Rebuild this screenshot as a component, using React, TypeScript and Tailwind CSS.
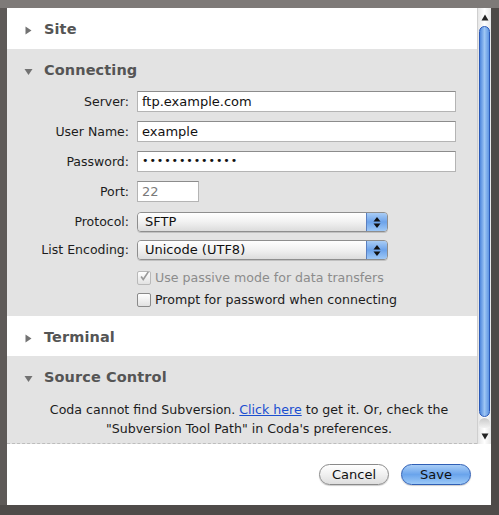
import React from 'react';

const font = { fontFamily: '"DejaVu Sans", "Lucida Grande", Verdana, sans-serif' };

function Disclosure({ open }: { open: boolean }) {
  return (
    <svg width="9" height="9" viewBox="0 0 9 9" className="shrink-0">
      {open ? <path d="M0.5 2 L8.5 2 L4.5 8 Z" fill="#727272" /> : <path d="M1.5 0.5 L7.5 4.5 L1.5 8.5 Z" fill="#727272" />}
    </svg>
  );
}

function SectionHeader({ title, open }: { title: string; open: boolean }) {
  return (
    <div className="flex items-center h-[42px] pl-[17px] pt-[2px]">
      <Disclosure open={open} />
      <span className="ml-[11px] text-[14.5px] font-bold text-[#555555] tracking-[0.1px]">{title}</span>
    </div>
  );
}

function Label({ children }: { children: React.ReactNode }) {
  return <div className="w-[123px] text-right text-[12.5px] text-[#1c1c1c] pr-[1px]">{children}</div>;
}

function TextField({ width, children, dim }: { width: string; children: React.ReactNode; dim?: boolean }) {
  return (
    <div
      className={`${width} h-[21px] ml-[7px] bg-white border border-[#b4b4b4] border-t-[#8c8c8c] flex items-center pl-[4px] text-[13px] ${dim ? 'text-[#7a7a7a]' : 'text-[#111111]'}`}
    >
      {children}
    </div>
  );
}

function Popup({ value }: { value: string }) {
  return (
    <div className="w-[251px] h-[20px] ml-[7px] flex rounded-[4px] border border-[#8e8e8e] overflow-hidden shadow-[0_1px_0_rgba(0,0,0,0.15)]">
      <div className="flex-1 flex items-center pl-[7px] text-[13px] text-[#111111] bg-gradient-to-b from-[#ffffff] via-[#f1f1f1] to-[#dcdcdc]">
        {value}
      </div>
      <div className="w-[21px] flex items-center justify-center border-l border-[#5a7fc0] bg-gradient-to-b from-[#a9ccf5] via-[#6da3ea] to-[#9ec8f6]">
        <svg width="8" height="13" viewBox="0 0 8 13">
          <path d="M4 1 L7.5 5.5 L0.5 5.5 Z" fill="#111" />
          <path d="M0.5 7.5 L7.5 7.5 L4 12 Z" fill="#111" />
        </svg>
      </div>
    </div>
  );
}

function Checkbox({ checked, disabled }: { checked?: boolean; disabled?: boolean }) {
  return (
    <div
      className={`w-[14px] h-[14px] rounded-[2px] border bg-gradient-to-b from-[#ffffff] to-[#e2e2e2] flex items-center justify-center ${disabled ? 'border-[#b9b9b9]' : 'border-[#8a8a8a]'}`}
    >
      {checked && (
        <svg width="13" height="13" viewBox="0 0 13 13" className="-mt-[3px] ml-[1px]">
          <path d="M2.5 6.5 L5 10 L11 1" stroke={disabled ? '#9a9a9a' : '#222'} strokeWidth="2" fill="none" />
        </svg>
      )}
    </div>
  );
}

function Scrollbar() {
  return (
    <div className="w-[14px] flex flex-col bg-gradient-to-r from-[#e6e6e6] via-[#ffffff] to-[#e6e6e6] border-l border-[#cfcfcf]">
      <div className="h-[18px] flex items-center justify-center">
        <svg width="8" height="7" viewBox="0 0 8 7">
          <path d="M4 0.5 L7.5 6.5 L0.5 6.5 Z" fill="#222" />
        </svg>
      </div>
      <div className="flex-1 mx-[1px] rounded-full border border-[#2a59b8] bg-gradient-to-r from-[#4f87dd] via-[#9ec6f4] to-[#5e95e2]" />
      <div className="h-[10px] mx-[1px] mt-[1px] rounded-t-full bg-gradient-to-b from-[#c9c9c9] to-[#f2f2f2]" />
      <div className="h-[16px] flex items-center justify-center">
        <svg width="8" height="7" viewBox="0 0 8 7">
          <path d="M0.5 0.5 L7.5 0.5 L4 6.5 Z" fill="#222" />
        </svg>
      </div>
    </div>
  );
}

export default function App() {
  return (
    <div className="w-[499px] h-[515px] bg-[#7e7a78] flex flex-col overflow-hidden" style={font}>
      <div className="h-[8px] shrink-0" />
      <div className="flex flex-1 min-h-0">
        <div className="w-[7px] shrink-0 bg-[#5e5a58]" />
        <div className="w-[484px] bg-white flex flex-col">
          <div className="flex h-[436px]">
            <div className="flex-1 flex flex-col">
              <section className="h-[41px] bg-white">
                <SectionHeader title="Site" open={false} />
              </section>

              <section className="h-[267px] bg-[#e3e3e3]">
                <SectionHeader title="Connecting" open />
                <div className="flex flex-col">
                  <div className="flex items-start h-[30px]">
                    <Label><span className="leading-[21px]">Server:</span></Label>
                    <TextField width="w-[319px]">ftp.example.com</TextField>
                  </div>
                  <div className="flex items-start h-[30px]">
                    <Label><span className="leading-[21px]">User Name:</span></Label>
                    <TextField width="w-[319px]">example</TextField>
                  </div>
                  <div className="flex items-start h-[30px]">
                    <Label><span className="leading-[21px]">Password:</span></Label>
                    <TextField width="w-[319px]">
                      <span className="text-[11px] tracking-[0.9px]">•••••••••••••</span>
                    </TextField>
                  </div>
                  <div className="flex items-start h-[31px]">
                    <Label><span className="leading-[21px]">Port:</span></Label>
                    <TextField width="w-[62px]" dim>22</TextField>
                  </div>
                  <div className="flex items-start h-[28px]">
                    <Label><span className="leading-[20px]">Protocol:</span></Label>
                    <Popup value="SFTP" />
                  </div>
                  <div className="flex items-start h-[27px]">
                    <Label><span className="leading-[20px]">List Encoding:</span></Label>
                    <Popup value="Unicode (UTF8)" />
                  </div>
                  <div className="flex items-center h-[22px] pl-[130px]">
                    <Checkbox checked disabled />
                    <span className="ml-[4px] text-[12.6px] text-[#8c8c8c]">Use passive mode for data transfers</span>
                  </div>
                  <div className="flex items-center h-[22px] pl-[130px]">
                    <Checkbox />
                    <span className="ml-[4px] text-[12.6px] text-[#1c1c1c]">Prompt for password when connecting</span>
                  </div>
                </div>
              </section>

              <section className="h-[40px] bg-white">
                <SectionHeader title="Terminal" open={false} />
              </section>

              <section className="flex-1 bg-[#e3e3e3] border-b border-dashed border-[#bdbdbd]">
                <SectionHeader title="Source Control" open />
                <p className="text-center text-[12.6px] leading-[19px] text-[#1c1c1c] mt-[2px] pl-[14px]">
                  Coda cannot find Subversion. <span className="text-[#1a4fd0] underline">Click here</span> to get it. Or, check the
                  <br />
                  "Subversion Tool Path" in Coda's preferences.
                </p>
              </section>
            </div>
            <Scrollbar />
          </div>

          <div className="flex-1 flex items-start justify-end pr-[20px] pt-[20px] gap-[12px]">
            <button className="w-[70px] h-[21px] rounded-full border border-[#8a8a8a] bg-gradient-to-b from-[#ffffff] via-[#f0f0f0] to-[#dedede] text-[13px] text-[#111] shadow-[0_1px_1px_rgba(0,0,0,0.2)]">
              Cancel
            </button>
            <button className="w-[70px] h-[21px] rounded-full border border-[#2f5fb5] bg-gradient-to-b from-[#a8cdf6] via-[#6aa4ec] to-[#9cc9f7] text-[13px] text-[#111] shadow-[0_1px_1px_rgba(0,0,0,0.2)]">
              Save
            </button>
          </div>
        </div>
        <div className="w-[8px] shrink-0 bg-[#4e4a48]" />
      </div>
      <div className="h-[10px] shrink-0 bg-[#4f4b49]" />
    </div>
  );
}
